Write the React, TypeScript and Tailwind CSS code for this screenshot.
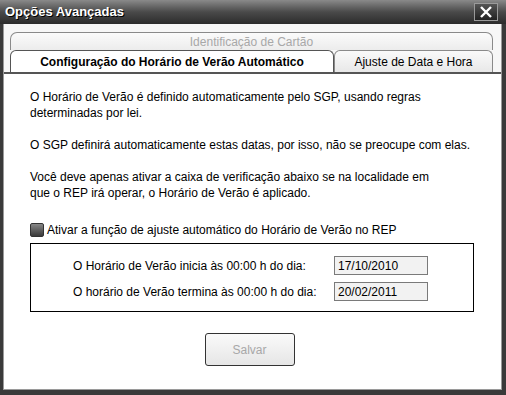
export default function App() {
  return (
    <div
      className="w-[506px] h-[395px] bg-[#3a3a3a] flex flex-col overflow-hidden"
      style={{ fontFamily: '"Liberation Sans", Arial, sans-serif' }}
    >
      {/* title bar */}
      <div className="h-[24px] shrink-0 flex items-center justify-between pl-[5px] pr-[8px] bg-gradient-to-b from-[#8a8a8a] via-[#4a4a4a] to-[#2c2c2c]">
        <span className="text-white text-[13px] font-bold [text-shadow:1px_1px_0_#000]">Opções Avançadas</span>
        <div className="w-[24px] h-[18px] border border-[#9a9a9a] bg-gradient-to-b from-[#555] to-[#222] flex items-center justify-center">
          <svg width="14" height="12" viewBox="0 0 14 12">
            <path d="M2 1 L12 11 M12 1 L2 11" stroke="#fff" strokeWidth="2.4" />
          </svg>
        </div>
      </div>

      {/* body frame */}
      <div className="flex-1 flex flex-col ml-[3px] mr-[4px] mb-[5px] border-l border-r border-b border-[#9a9a9a] bg-[#f7f7f7]">
        {/* tabs */}
        <div className="pt-[8px] px-[5px]">
          <div className="h-[18px] ml-[1px] mr-[3px] rounded-t-[7px] border border-b-0 border-[#8a8a8a] bg-gradient-to-b from-[#fbfbfb] to-[#ececec] flex items-center justify-center">
            <span className="text-[12px] text-[#a8a8a8]">Identificação de Cartão</span>
          </div>
          <div className="flex h-[22px] mr-[3px] ml-[1px]">
            <div className="w-[324px] rounded-t-[6px] border border-b-0 border-[#555] bg-white flex items-center justify-center">
              <span className="text-[12px] font-bold text-black">Configuração do Horário de Verão Automático</span>
            </div>
            <div className="flex-1 rounded-t-[6px] border border-b-0 border-[#8a8a8a] bg-gradient-to-b from-[#fafafa] to-[#e8e8e8] flex items-center justify-center">
              <span className="text-[12px] text-black">Ajuste de Data e Hora</span>
            </div>
          </div>
        </div>

        {/* content */}
        <div className="flex-1 bg-white border-t-[2px] border-[#555] pl-[26px] pr-[10px] pt-[15px] text-[12px] leading-[16px] text-black">
          <p>
            O Horário de Verão é definido automaticamente pelo SGP, usando regras
            <br />
            determinadas por lei.
          </p>
          <p className="mt-[16px]">O SGP definirá automaticamente estas datas, por isso, não se preocupe com elas.</p>
          <p className="mt-[16px]">
            Você deve apenas ativar a caixa de verificação abaixo se na localidade em
            <br />
            que o REP irá operar, o Horário de Verão é aplicado.
          </p>

          <div className="mt-[21px] flex items-center gap-[3px]">
            <div className="w-[14px] h-[14px] rounded-[2px] border border-[#333] bg-gradient-to-b from-[#888] to-[#3a3a3a]" />
            <span>Ativar a função de ajuste automático do Horário de Verão no REP</span>
          </div>

          <div className="mt-[5px] w-[444px] h-[69px] border border-black pl-[42px] pt-[12px] flex flex-col gap-[7px]">
            <div className="flex items-center">
              <span className="w-[261px]">O Horário de Verão inicia às 00:00 h do dia:</span>
              <div className="w-[94px] h-[19px] border border-[#7a7a7a] bg-[#f2f2f2] pl-[3px] flex items-center">17/10/2010</div>
            </div>
            <div className="flex items-center">
              <span className="w-[261px]">O horário de Verão termina às 00:00 h do dia:</span>
              <div className="w-[94px] h-[19px] border border-[#7a7a7a] bg-[#f2f2f2] pl-[3px] flex items-center">20/02/2011</div>
            </div>
          </div>

          <div className="mt-[21px] flex justify-center pr-[22px]">
            <div className="w-[90px] h-[33px] rounded-[3px] border border-[#333] bg-gradient-to-b from-[#fafafa] to-[#e6e6e6] flex items-center justify-center text-[#a8a8a8]">
              Salvar
            </div>
          </div>
        </div>
      </div>
    </div>
  );
}
